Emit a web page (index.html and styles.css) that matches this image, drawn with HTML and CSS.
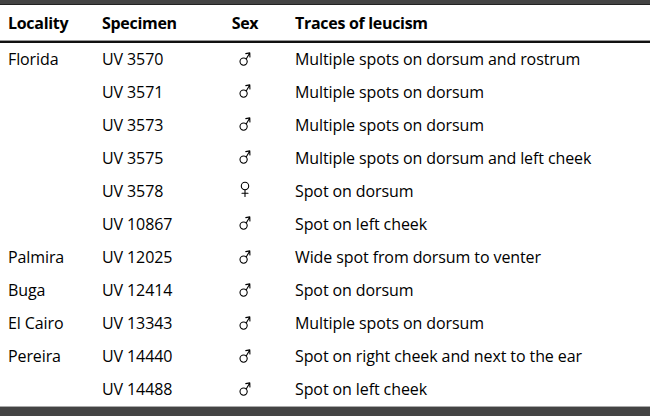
FILE: index.html
```html
<!DOCTYPE html>
<html>
<head>
<meta charset="utf-8">
<link rel="stylesheet" href="styles.css">
</head>
<body>
<div class="frame">
  <div class="topbar"></div>
  <table class="tbl">
    <colgroup><col class="c-loc"><col class="c-spec"><col class="c-sex"><col></colgroup>
    <thead>
      <tr><th>Locality</th><th>Specimen</th><th class="sex-h">Sex</th><th>Traces of leucism</th></tr>
    </thead>
    <tbody>
      <tr><td>Florida</td><td>UV 3570</td><td class="sex"><svg class="ico" viewBox="0 0 12 17" aria-label="♂"><circle cx="4.6" cy="11.6" r="3.6"/><path d="M7.2 9L10.6 3.2M6.8 3.6L10.8 2.9L10.9 6.9"/></svg></td><td>Multiple spots on dorsum and rostrum</td></tr>
      <tr><td></td><td>UV 3571</td><td class="sex"><svg class="ico" viewBox="0 0 12 17" aria-label="♂"><circle cx="4.6" cy="11.6" r="3.6"/><path d="M7.2 9L10.6 3.2M6.8 3.6L10.8 2.9L10.9 6.9"/></svg></td><td>Multiple spots on dorsum</td></tr>
      <tr><td></td><td>UV 3573</td><td class="sex"><svg class="ico" viewBox="0 0 12 17" aria-label="♂"><circle cx="4.6" cy="11.6" r="3.6"/><path d="M7.2 9L10.6 3.2M6.8 3.6L10.8 2.9L10.9 6.9"/></svg></td><td>Multiple spots on dorsum</td></tr>
      <tr><td></td><td>UV 3575</td><td class="sex"><svg class="ico" viewBox="0 0 12 17" aria-label="♂"><circle cx="4.6" cy="11.6" r="3.6"/><path d="M7.2 9L10.6 3.2M6.8 3.6L10.8 2.9L10.9 6.9"/></svg></td><td>Multiple spots on dorsum and left cheek</td></tr>
      <tr><td></td><td>UV 3578</td><td class="sex"><svg class="ico" viewBox="0 0 12 17" aria-label="♀"><circle cx="6" cy="5" r="3.7"/><path d="M6 8.7L6 15.5M3 12.3L9 12.3"/></svg></td><td>Spot on dorsum</td></tr>
      <tr><td></td><td>UV 10867</td><td class="sex"><svg class="ico" viewBox="0 0 12 17" aria-label="♂"><circle cx="4.6" cy="11.6" r="3.6"/><path d="M7.2 9L10.6 3.2M6.8 3.6L10.8 2.9L10.9 6.9"/></svg></td><td>Spot on left cheek</td></tr>
      <tr><td>Palmira</td><td>UV 12025</td><td class="sex"><svg class="ico" viewBox="0 0 12 17" aria-label="♂"><circle cx="4.6" cy="11.6" r="3.6"/><path d="M7.2 9L10.6 3.2M6.8 3.6L10.8 2.9L10.9 6.9"/></svg></td><td>Wide spot from dorsum to venter</td></tr>
      <tr><td>Buga</td><td>UV 12414</td><td class="sex"><svg class="ico" viewBox="0 0 12 17" aria-label="♂"><circle cx="4.6" cy="11.6" r="3.6"/><path d="M7.2 9L10.6 3.2M6.8 3.6L10.8 2.9L10.9 6.9"/></svg></td><td>Spot on dorsum</td></tr>
      <tr><td>El Cairo</td><td>UV 13343</td><td class="sex"><svg class="ico" viewBox="0 0 12 17" aria-label="♂"><circle cx="4.6" cy="11.6" r="3.6"/><path d="M7.2 9L10.6 3.2M6.8 3.6L10.8 2.9L10.9 6.9"/></svg></td><td>Multiple spots on dorsum</td></tr>
      <tr><td>Pereira</td><td>UV 14440</td><td class="sex"><svg class="ico" viewBox="0 0 12 17" aria-label="♂"><circle cx="4.6" cy="11.6" r="3.6"/><path d="M7.2 9L10.6 3.2M6.8 3.6L10.8 2.9L10.9 6.9"/></svg></td><td>Spot on right cheek and next to the ear</td></tr>
      <tr><td></td><td>UV 14488</td><td class="sex"><svg class="ico" viewBox="0 0 12 17" aria-label="♂"><circle cx="4.6" cy="11.6" r="3.6"/><path d="M7.2 9L10.6 3.2M6.8 3.6L10.8 2.9L10.9 6.9"/></svg></td><td>Spot on left cheek</td></tr>
    </tbody>
  </table>
  <div class="bottombar"></div>
</div>
</body>
</html>
```
FILE: styles.css
```css
html, body {
  margin: 0;
  padding: 0;
  background: #fff;
}
.frame {
  width: 650px;
  height: 416px;
  overflow: hidden;
  font-family: "Open Sans", "Liberation Sans", sans-serif;
  font-size: 16px;
  color: #000;
}
.topbar {
  height: 4px;
  background: #444;
  border-bottom: 1px solid #222;
}
.tbl {
  width: 650px;
  height: 401px;
  border-collapse: collapse;
  table-layout: fixed;
}
.c-loc { width: 94px; }
.c-spec { width: 109px; }
.c-sex { width: 84px; }
.tbl thead tr { height: 37px; }
.tbl tbody tr { height: 33px; }
.tbl th {
  font-weight: 700;
  text-align: left;
  padding: 0 0 0 8px;
  border-bottom: 2px solid #111;
  box-shadow: 0 -1px 0 #999 inset;
  letter-spacing: -0.3px;
}
.tbl td {
  padding: 0 0 0 8px;
  vertical-align: middle;
  white-space: nowrap;
  letter-spacing: -0.1px;
}
.tbl th.sex-h {
  text-align: center;
  padding: 0;
}
.tbl td.sex {
  padding: 0 0 2px 0;
  text-align: center;
  line-height: 0;
  font-size: 0;
}
.ico {
  width: 12px;
  height: 17px;
  display: inline-block;
  fill: none;
  stroke: #000;
  stroke-width: 1.1;
  stroke-linecap: round;
  stroke-linejoin: round;
}
.bottombar {
  height: 9px;
  background: #444;
  border-top: 1px solid #aaa;
}
```
